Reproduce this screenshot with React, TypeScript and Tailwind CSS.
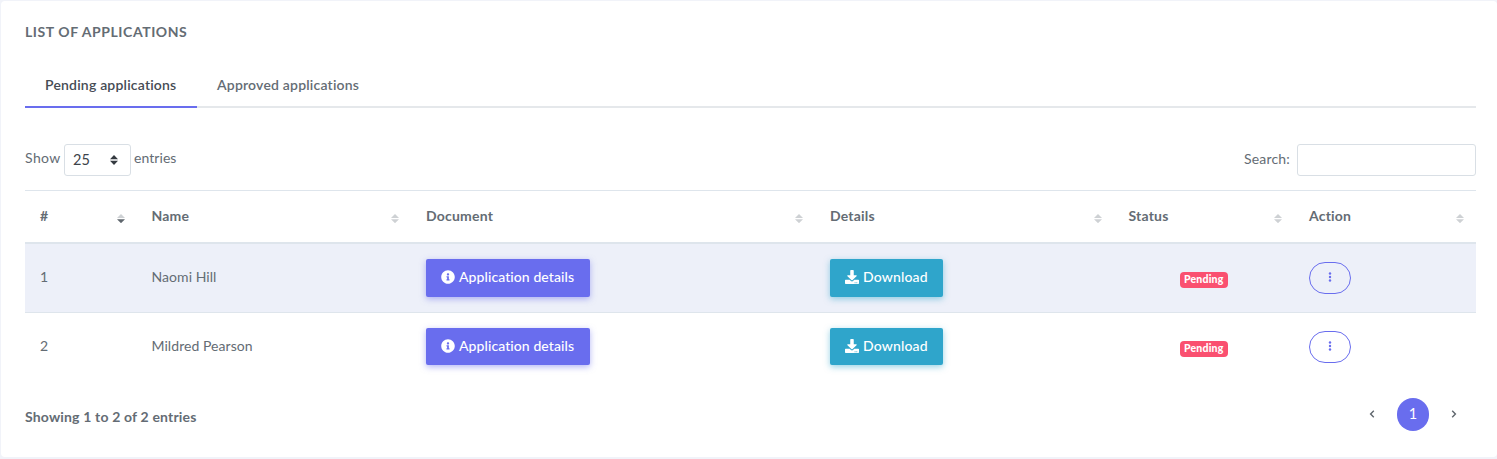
import { FaInfoCircle, FaDownload } from "react-icons/fa";

type Application = { id: number; name: string };

const applications: Application[] = [
  { id: 1, name: "Naomi Hill" },
  { id: 2, name: "Mildred Pearson" },
];

function SortIcon({ active = false }: { active?: boolean }) {
  return (
    <svg width="8" height="9" viewBox="0 0 8 9" className="mt-[3px] shrink-0">
      <path d="M4 0L8 4H0z" fill="#ced1d4" />
      <path d="M0 5.2H8L4 9.2z" fill={active ? "#5f666d" : "#ced1d4"} />
    </svg>
  );
}

function HeaderCell({ label, className, active }: { label: string; className: string; active?: boolean }) {
  return (
    <th className={`border-t border-b-2 border-[#dee5ec] p-0 font-bold tracking-[0.2px] ${className}`}>
      <div className="flex h-[51px] items-center justify-between pr-[12px] pl-[15px]">
        <span className="pb-[2px]">{label}</span>
        <SortIcon active={active} />
      </div>
    </th>
  );
}

function Row({ app, first }: { app: Application; first: boolean }) {
  const cell = first ? "h-[69px] border-b border-[#dee5ec] bg-[#edf0f9] pl-[15px]" : "h-[68px] pl-[15px]";
  const button = first ? "h-[38px]" : "mb-px h-[37px]";
  return (
    <tr>
      <td className={`${cell} pb-[2px]`}>{app.id}</td>
      <td className={`${cell} pb-[2px]`}>{app.name}</td>
      <td className={cell}>
        <button
          className={`flex w-[164px] items-center gap-[4px] rounded-[2px] bg-[#696dee] pl-[15px] font-medium text-white shadow-[0_2px_6px_rgba(105,109,238,0.5)] ${button}`}
        >
          <FaInfoCircle size={14} className="mb-[2px] shrink-0" />
          <span className="pb-[2px] whitespace-nowrap tracking-[0.08px]">Application details</span>
        </button>
      </td>
      <td className={cell}>
        <button
          className={`flex w-[113px] items-center gap-[4px] rounded-[2px] bg-[#2fa5cb] pl-[15px] font-medium text-white shadow-[0_2px_6px_rgba(47,165,203,0.5)] ${button}`}
        >
          <FaDownload size={14} className="mb-[2px] shrink-0" />
          <span className="pb-[2px] tracking-[0.15px]">Download</span>
        </button>
      </td>
      <td className={`${cell} pr-[15px] text-center`}>
        <span className="mt-[2px] inline-flex h-4 w-12 items-center justify-center rounded-[4px] bg-[#fa5070] align-middle text-[10.5px] font-black tracking-[0.2px] text-white">
          <span className="pb-[3px]">Pending</span>
        </span>
      </td>
      <td className={cell}>
        <button className="flex h-8 w-[42px] items-center justify-center rounded-full border border-[#696dee] pb-[2px]">
          <svg width="4" height="10" viewBox="0 0 4 10" fill="#696dee">
            <circle cx="2" cy="1.5" r="1.2" />
            <circle cx="2" cy="5" r="1.2" />
            <circle cx="2" cy="8.5" r="1.2" />
          </svg>
        </button>
      </td>
    </tr>
  );
}

export default function App() {
  return (
    <div className="h-[459px] w-[1497px] overflow-hidden bg-[#f1f3f9] pt-px pl-px font-['Lato',sans-serif] text-[14px] leading-5 tracking-[0.06px] text-[#646c74]">
      <main className="h-[456px] rounded-[4px] bg-white pr-[21px] pl-6">
        <h1 className="pt-[21px] font-bold tracking-[0.56px]">LIST OF APPLICATIONS</h1>

        <nav className="mt-[22px] flex h-[44px] border-b-2 border-[#e5e8eb] font-semibold tracking-[0.2px]">
          <a className="h-[44px] w-[172px] border-b-2 border-[#696dee] pt-[11px] pl-5 whitespace-nowrap text-[#454b54]">
            Pending applications
          </a>
          <a className="pt-[11px] pl-5 whitespace-nowrap">Approved applications</a>
        </nav>

        <div className="mt-9 flex h-8 items-center justify-between">
          <div className="flex items-center">
            <span className="w-[39px] pb-[4px] tracking-[0.4px]">Show</span>
            <div className="flex h-8 w-[67px] items-center justify-between rounded-[3px] border border-[#d9dfe5] pr-3 pl-2 text-[#3d434b]">
              <span className="pb-px text-[14.5px]">25</span>
              <svg width="8" height="10" viewBox="0 0 8 10" fill="#343a40">
                <path d="M4 0L8 4.2H0zM0 5.8H8L4 10z" />
              </svg>
            </div>
            <span className="pb-[4px] pl-[3px]">entries</span>
          </div>
          <label className="flex items-center gap-[7px]">
            <span className="pb-[2px] tracking-[0.2px]">Search:</span>
            <input className="h-8 w-[179px] rounded-[3px] border border-[#d9dfe5] outline-none" />
          </label>
        </div>

        <table className="mt-[14px] w-[1451px] table-fixed border-separate border-spacing-0 text-left">
          <thead>
            <tr>
              <HeaderCell label="#" className="w-[111.5px]" active />
              <HeaderCell label="Name" className="w-[274.5px]" />
              <HeaderCell label="Document" className="w-[404px]" />
              <HeaderCell label="Details" className="w-[298.5px]" />
              <HeaderCell label="Status" className="w-[180.5px]" />
              <HeaderCell label="Action" className="w-[182px]" />
            </tr>
          </thead>
          <tbody>
            {applications.map((app, i) => (
              <Row key={app.id} app={app} first={i === 0} />
            ))}
          </tbody>
        </table>

        <footer className="mt-[17px] flex items-center justify-between">
          <p className="pt-[5px] font-bold tracking-[0.17px]">Showing 1 to 2 of 2 entries</p>
          <div className="flex items-center pr-[19px]">
            <svg width="6" height="8" viewBox="0 0 6 8" className="mb-[2px]" fill="none" stroke="#5f666d" strokeWidth="1.4">
              <path d="M4.8 0.8L1.6 4l3.2 3.2" />
            </svg>
            <span className="mx-[22px] flex h-[33px] w-8 items-center justify-center rounded-full bg-[#696dee] pb-px text-[14.5px] text-white">
              1
            </span>
            <svg width="6" height="8" viewBox="0 0 6 8" className="mb-[2px]" fill="none" stroke="#5f666d" strokeWidth="1.4">
              <path d="M1.2 0.8L4.4 4L1.2 7.2" />
            </svg>
          </div>
        </footer>
      </main>
    </div>
  );
}
